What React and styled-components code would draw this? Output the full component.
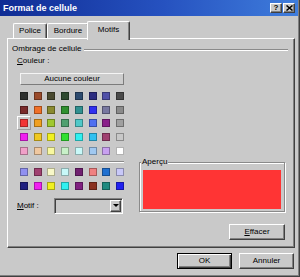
import React from 'react';
import styled, { createGlobalStyle, css } from 'styled-components';

const FACE = '#c9c9c9';

const GlobalStyle = createGlobalStyle`
  html, body {
    margin: 0;
    padding: 0;
    background: ${FACE};
  }
  * {
    box-sizing: border-box;
  }
`;

const palette = [
	['#2d302e', '#9a4a2a', '#4a4a30', '#2e4a30', '#2c4a6e', '#2c2c80', '#5050a8', '#4a4a4a'],
	['#7a2a2a', '#f07028', '#8a8a30', '#309030', '#309090', '#3030f0', '#7878a0', '#8a8a8a'],
	['#f23434', '#f0a020', '#a0c830', '#50a070', '#50c8c8', '#5070f0', '#8a208a', '#a0a0a0'],
	['#f020f0', '#f0c820', '#f0f020', '#30e030', '#30f0f0', '#30c0f0', '#a04070', '#c8c8c8'],
	['#f0a0c8', '#f0c8a0', '#f8f8a0', '#c8f0c8', '#c8f8f8', '#a0c8f0', '#c8a0f0', '#ffffff'],
];

const chartColors = [
	['#9090f0', '#a04070', '#f8f8c8', '#c8f8f8', '#702070', '#f08080', '#2070d0', '#c8c8f8'],
	['#202080', '#f020f0', '#f0f020', '#30f0f0', '#802080', '#8a3020', '#208a80', '#2020f0'],
];

export default function App() {
	return (
		<>
			<GlobalStyle />
			<Window>
				<TitleBar>
					<Title>Format de cellule</Title>
					<CaptionButtons>
						<CaptionButton>?</CaptionButton>
						<CaptionButton>
							<svg width='7' height='6' viewBox='0 0 7 6'>
								<path d='M0.5 0.5 L6.5 5.5 M6.5 0.5 L0.5 5.5' stroke='#000' strokeWidth='1.5' />
							</svg>
						</CaptionButton>
					</CaptionButtons>
				</TitleBar>

				<Body>
					<TabStrip>
						<Tab $w={34}>Police</Tab>
						<Tab $w={42}>Bordure</Tab>
						<Tab $w={39} $active>Motifs</Tab>
					</TabStrip>

					<Panel>
						<GroupHeader>
							<span>Ombrage de cellule</span>
							<Etched />
						</GroupHeader>

						<Columns>
							<ColorColumn>
								<FieldLabel>
									<u>C</u>ouleur :
								</FieldLabel>
								<WideButton>Aucune couleur</WideButton>
								<Swatches>
									{palette.map((row, r) =>
										row.map((c, i) => (
											<Swatch key={`${r}-${i}`} $c={c} $selected={r === 2 && i === 0} />
										))
									)}
								</Swatches>
								<Separator />
								<Swatches $top={5}>
									{chartColors.map((row, r) =>
										row.map((c, i) => <Swatch key={`c${r}-${i}`} $c={c} />)
									)}
								</Swatches>
								<MotifRow>
									<MotifLabel>
										<u>M</u>otif :
									</MotifLabel>
									<Combo>
										<DropButton>
											<Arrow />
										</DropButton>
									</Combo>
								</MotifRow>
							</ColorColumn>

							<PreviewColumn>
								<PreviewFrame>
									<Legend>Aperçu</Legend>
									<PreviewFill />
								</PreviewFrame>
								<Button $w={56}>
									<u>E</u>ffacer
								</Button>
							</PreviewColumn>
						</Columns>
					</Panel>

					<ButtonRow>
						<Button $w={55} $default>
							OK
						</Button>
						<Button $w={55}>Annuler</Button>
					</ButtonRow>
				</Body>
			</Window>
		</>
	);
}

const raised = css`
	border: 1px solid;
	border-color: #fff #404040 #404040 #fff;
	box-shadow: inset -1px -1px 0 #808080;
`;

const Window = styled.div`
	width: 300px;
	height: 277px;
	display: flex;
	flex-direction: column;
	background: ${FACE};
	border-right: 1px solid #404040;
	border-bottom: 1px solid #404040;
	box-shadow: inset -1px -1px 0 #808080;
	font-family: 'Liberation Sans', Arial, sans-serif;
	font-size: 8px;
	line-height: 10px;
	color: #000;
`;

const TitleBar = styled.div`
	height: 16px;
	margin-right: 1px;
	display: flex;
	align-items: center;
	padding: 0 3px 0 3px;
	background: linear-gradient(90deg, #0f2c94 0%, #2652c0 55%, #3f7ddc 100%);
`;

const Title = styled.span`
	color: #fff;
	font-weight: bold;
	font-size: 9px;
	line-height: 12px;
`;

const CaptionButtons = styled.div`
	margin-left: auto;
	display: flex;
	gap: 1px;
`;

const CaptionButton = styled.div`
	width: 12px;
	height: 10px;
	display: flex;
	align-items: center;
	justify-content: center;
	background: ${FACE};
	${raised};
	font-weight: bold;
	font-size: 8px;
	line-height: 8px;
`;

const Body = styled.div`
	flex: 1;
	display: flex;
	flex-direction: column;
	padding: 5px 4px 7px 7px;
`;

const TabStrip = styled.div`
	height: 17px;
	display: flex;
	align-items: flex-end;
	padding-left: 6px;
`;

const Tab = styled.div`
	width: ${(p) => p.$w + (p.$active ? 4 : 0)}px;
	height: ${(p) => (p.$active ? 19 : 15)}px;
	display: flex;
	align-items: center;
	justify-content: center;
	background: ${FACE};
	border: 1px solid;
	border-bottom: none;
	border-color: #fff #404040 #404040 #fff;
	border-radius: 2px 2px 0 0;
	box-shadow: inset -1px 0 0 #808080;
	padding-bottom: ${(p) => (p.$active ? 3 : 0)}px;
	${(p) =>
		p.$active &&
		css`
			position: relative;
			z-index: 1;
			margin: 0 -2px -2px;
		`}
`;

const Panel = styled.div`
	flex: 1;
	display: flex;
	flex-direction: column;
	border: 1px solid;
	border-color: #fff #404040 #404040 #fff;
	box-shadow: inset -1px -1px 0 #808080;
`;

const GroupHeader = styled.div`
	display: flex;
	align-items: center;
	gap: 3px;
	margin: 5px 6px 0 4px;
`;

const Etched = styled.div`
	flex: 1;
	height: 2px;
	margin-top: 2px;
	border-top: 1px solid #8a8a8a;
	border-bottom: 1px solid #fff;
`;

const Columns = styled.div`
	flex: 1;
	display: flex;
`;

const ColorColumn = styled.div`
	width: 116px;
	flex: none;
	display: flex;
	flex-direction: column;
	padding-left: 9px;
	padding-top: 2px;
`;

const FieldLabel = styled.div`
	line-height: 10px;
`;

const WideButton = styled.div`
	width: 104px;
	height: 12px;
	margin: 7px 0 0 3px;
	display: flex;
	align-items: center;
	justify-content: center;
	background: #cdcdcd;
	border: 1px solid;
	border-color: #f4f4f4 #7c7c7c #7c7c7c #f4f4f4;
`;

const Swatches = styled.div`
	width: 104px;
	margin: ${(p) => p.$top ?? 7}px 0 0 3px;
	display: grid;
	grid-template-columns: repeat(8, 8px);
	justify-content: space-between;
	row-gap: 5.65px;
`;

const Swatch = styled.div`
	width: 8px;
	height: 8px;
	background: ${(p) => p.$c};
	border: 1px solid rgba(0, 0, 0, 0.3);
	position: relative;
	${(p) =>
		p.$selected &&
		css`
			&::after {
				content: '';
				position: absolute;
				inset: -4px;
				border: 1px solid;
				border-color: #fff #9a9a9a #9a9a9a #fff;
			}
		`}
`;

const Separator = styled.div`
	width: 104px;
	height: 2px;
	margin: 6.4px 0 0 3px;
	border-top: 1px solid #8a8a8a;
	border-bottom: 1px solid #fff;
`;

const MotifRow = styled.div`
	display: flex;
	align-items: center;
	margin-top: 8.4px;
`;

const MotifLabel = styled.div`
	width: 37px;
`;

const Combo = styled.div`
	width: 69px;
	height: 16px;
	display: flex;
	justify-content: flex-end;
	padding: 1px;
	background: ${FACE};
	border: 1px solid;
	border-color: #808080 #fff #fff #808080;
	box-shadow: inset 1px 1px 0 #404040;
`;

const DropButton = styled.div`
	width: 11px;
	height: 12px;
	display: flex;
	align-items: center;
	justify-content: center;
	${raised};
`;

const Arrow = styled.div`
	width: 0;
	height: 0;
	border-left: 3px solid transparent;
	border-right: 3px solid transparent;
	border-top: 3px solid #000;
`;

const PreviewColumn = styled.div`
	flex: 1;
	display: flex;
	flex-direction: column;
	align-items: flex-end;
	justify-content: flex-end;
	gap: 12px;
	padding: 0 9px 7px 0;
`;

const PreviewFrame = styled.div`
	width: 146px;
	height: 50px;
	position: relative;
	padding: 7px 3px 2px 3px;
	border: 1px solid #8a8a8a;
	box-shadow: 1px 1px 0 #fff, inset 1px 1px 0 #fff;
`;

const Legend = styled.span`
	position: absolute;
	top: -6px;
	left: 1px;
	padding: 0 1px;
	background: ${FACE};
`;

const PreviewFill = styled.div`
	height: 100%;
	background: #ff3434;
`;

const Button = styled.div`
	width: ${(p) => p.$w}px;
	height: 16px;
	display: flex;
	align-items: center;
	justify-content: center;
	background: ${FACE};
	${(p) =>
		p.$default
			? css`
					border: 1px solid #000;
					box-shadow: inset 1px 1px 0 #fff, inset -1px -1px 0 #404040,
						inset -2px -2px 0 #808080;
			  `
			: raised};
`;

const ButtonRow = styled.div`
	display: flex;
	justify-content: flex-end;
	gap: 7px;
	margin-top: 5px;
	padding-right: 1px;
`;
